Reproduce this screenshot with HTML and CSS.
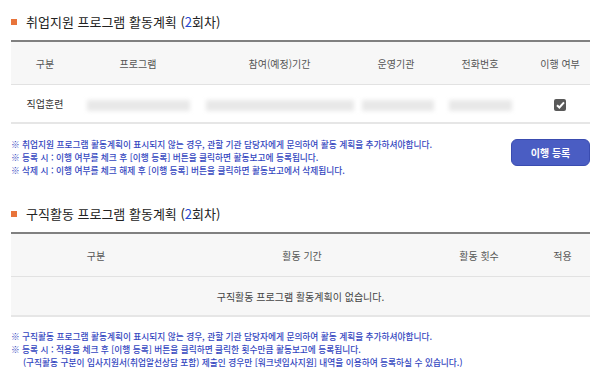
FILE: index.html
```html
<!DOCTYPE html>
<html lang="ko">
<head>
  <meta charset="UTF-8">
  <title>활동계획</title>
  <link rel="stylesheet" href="styles.css">
</head>
<body>

  <h2 class="sec-title">취업지원 프로그램 활동계획 (<span class="num">2</span>회차)</h2>
  <table class="plan">
    <colgroup>
      <col style="width:68px"><col style="width:118px"><col style="width:165px">
      <col style="width:68px"><col style="width:100px"><col style="width:60px">
    </colgroup>
    <thead>
      <tr>
        <th>구분</th><th>프로그램</th><th>참여(예정)기간</th><th>운영기관</th><th>전화번호</th><th>이행 여부</th>
      </tr>
    </thead>
    <tbody>
      <tr>
        <td>직업훈련</td>
        <td><span class="blur" style="width:103px"></span></td>
        <td><span class="blur" style="width:148px"></span></td>
        <td><span class="blur" style="width:72px"></span></td>
        <td><span class="blur" style="width:63px"></span></td>
        <td>
          <span class="chk">
            <svg width="9" height="8" viewBox="0 0 9 8"><path d="M1 4.2 L3.4 6.5 L8 1.3" fill="none" stroke="#fff" stroke-width="2"/></svg>
          </span>
        </td>
      </tr>
    </tbody>
  </table>

  <div class="note-row">
    <ul class="notes">
      <li>※ 취업지원 프로그램 활동계획이 표시되지 않는 경우, 관할 기관 담당자에게 문의하여 활동 계획을 추가하셔야합니다.</li>
      <li>※ 등록 시 : 이행 여부를 체크 후 [이행 등록] 버튼을 클릭하면 활동보고에 등록됩니다.</li>
      <li>※ 삭제 시 : 이행 여부를 체크 해제 후 [이행 등록] 버튼을 클릭하면 활동보고에서 삭제됩니다.</li>
    </ul>
    <button class="btn-reg">이행 등록</button>
  </div>

  <h2 class="sec-title sec2">구직활동 프로그램 활동계획 (<span class="num">2</span>회차)</h2>
  <table class="plan">
    <colgroup>
      <col style="width:170px"><col style="width:242px"><col style="width:112px"><col style="width:55px">
    </colgroup>
    <thead>
      <tr>
        <th>구분</th><th>활동 기간</th><th>활동 횟수</th><th>적용</th>
      </tr>
    </thead>
    <tbody>
      <tr class="empty">
        <td colspan="4">구직활동 프로그램 활동계획이 없습니다.</td>
      </tr>
    </tbody>
  </table>

  <ul class="notes notes2">
    <li>※ 구직활동 프로그램 활동계획이 표시되지 않는 경우, 관할 기관 담당자에게 문의하여 활동 계획을 추가하셔야합니다.</li>
    <li>※ 등록 시 : 적용을 체크 후 [이행 등록] 버튼을 클릭하면 클릭한 횟수만큼 활동보고에 등록됩니다.</li>
    <li class="indent">(구직활동 구분이 입사지원서(취업알선상담 포함) 제출인 경우만 [워크넷입사지원] 내역을 이용하여 등록하실 수 있습니다.)</li>
  </ul>

</body>
</html>
```

FILE: styles.css
```css
body {
  margin: 0;
  padding: 0 10px 0 11px;
  background: #fff;
  font-family: "Noto Sans CJK KR", "Noto Sans", sans-serif;
  color: #333;
}

.sec-title {
  margin: 0 0 8px;
  padding-top: 12px;
  height: 20px;
  line-height: 20px;
  font-size: 13px;
  font-weight: 400;
  color: #222;
  display: flex;
  align-items: center;
}

.sec-title::before {
  content: "";
  width: 6px;
  height: 6px;
  background: #e8743b;
  margin-right: 9px;
}

.sec-title .num {
  color: #2449d0;
}

.sec2 {
  padding-top: 0;
  margin-top: 27px;
}

.plan {
  width: 579px;
  border-collapse: collapse;
  table-layout: fixed;
  border-top: 2px solid #808080;
}

.plan th {
  height: 42px;
  padding: 0;
  background: #f7f7f7;
  border-bottom: 1px solid #e2e2e2;
  font-size: 10px;
  font-weight: 400;
  color: #555;
  text-align: center;
}

.plan td {
  height: 37px;
  padding: 0;
  font-size: 10px;
  color: #444;
  text-align: center;
  border-bottom: 2px solid #e6e6e6;
}

.plan td:first-child {
  color: #333;
}

.plan .empty td {
  height: 38px;
  background: #f7f7f7;
  color: #444;
}

.blur {
  display: inline-block;
  height: 11px;
  vertical-align: middle;
  background: #e8e8e8;
  filter: blur(2px);
}

.chk {
  display: inline-flex;
  align-items: center;
  justify-content: center;
  width: 12px;
  height: 12px;
  background: #595959;
  border-radius: 2px;
  vertical-align: middle;
}

.note-row {
  display: flex;
  justify-content: space-between;
  align-items: flex-start;
  margin-top: 14px;
}

.notes {
  list-style: none;
  margin: 0;
  padding: 0;
  font-size: 8.7px;
  line-height: 13px;
  color: #3346c0;
  font-weight: 500;
}

.notes2 {
  margin-top: 13px;
}

.notes .indent {
  padding-left: 12px;
}

.btn-reg {
  width: 79px;
  height: 27px;
  margin-top: 1px;
  background: #4a5dc3;
  border: 1px solid #3a4cb0;
  border-radius: 6px;
  color: #fff;
  font-family: inherit;
  font-size: 10px;
  font-weight: 700;
  cursor: pointer;
}
```
